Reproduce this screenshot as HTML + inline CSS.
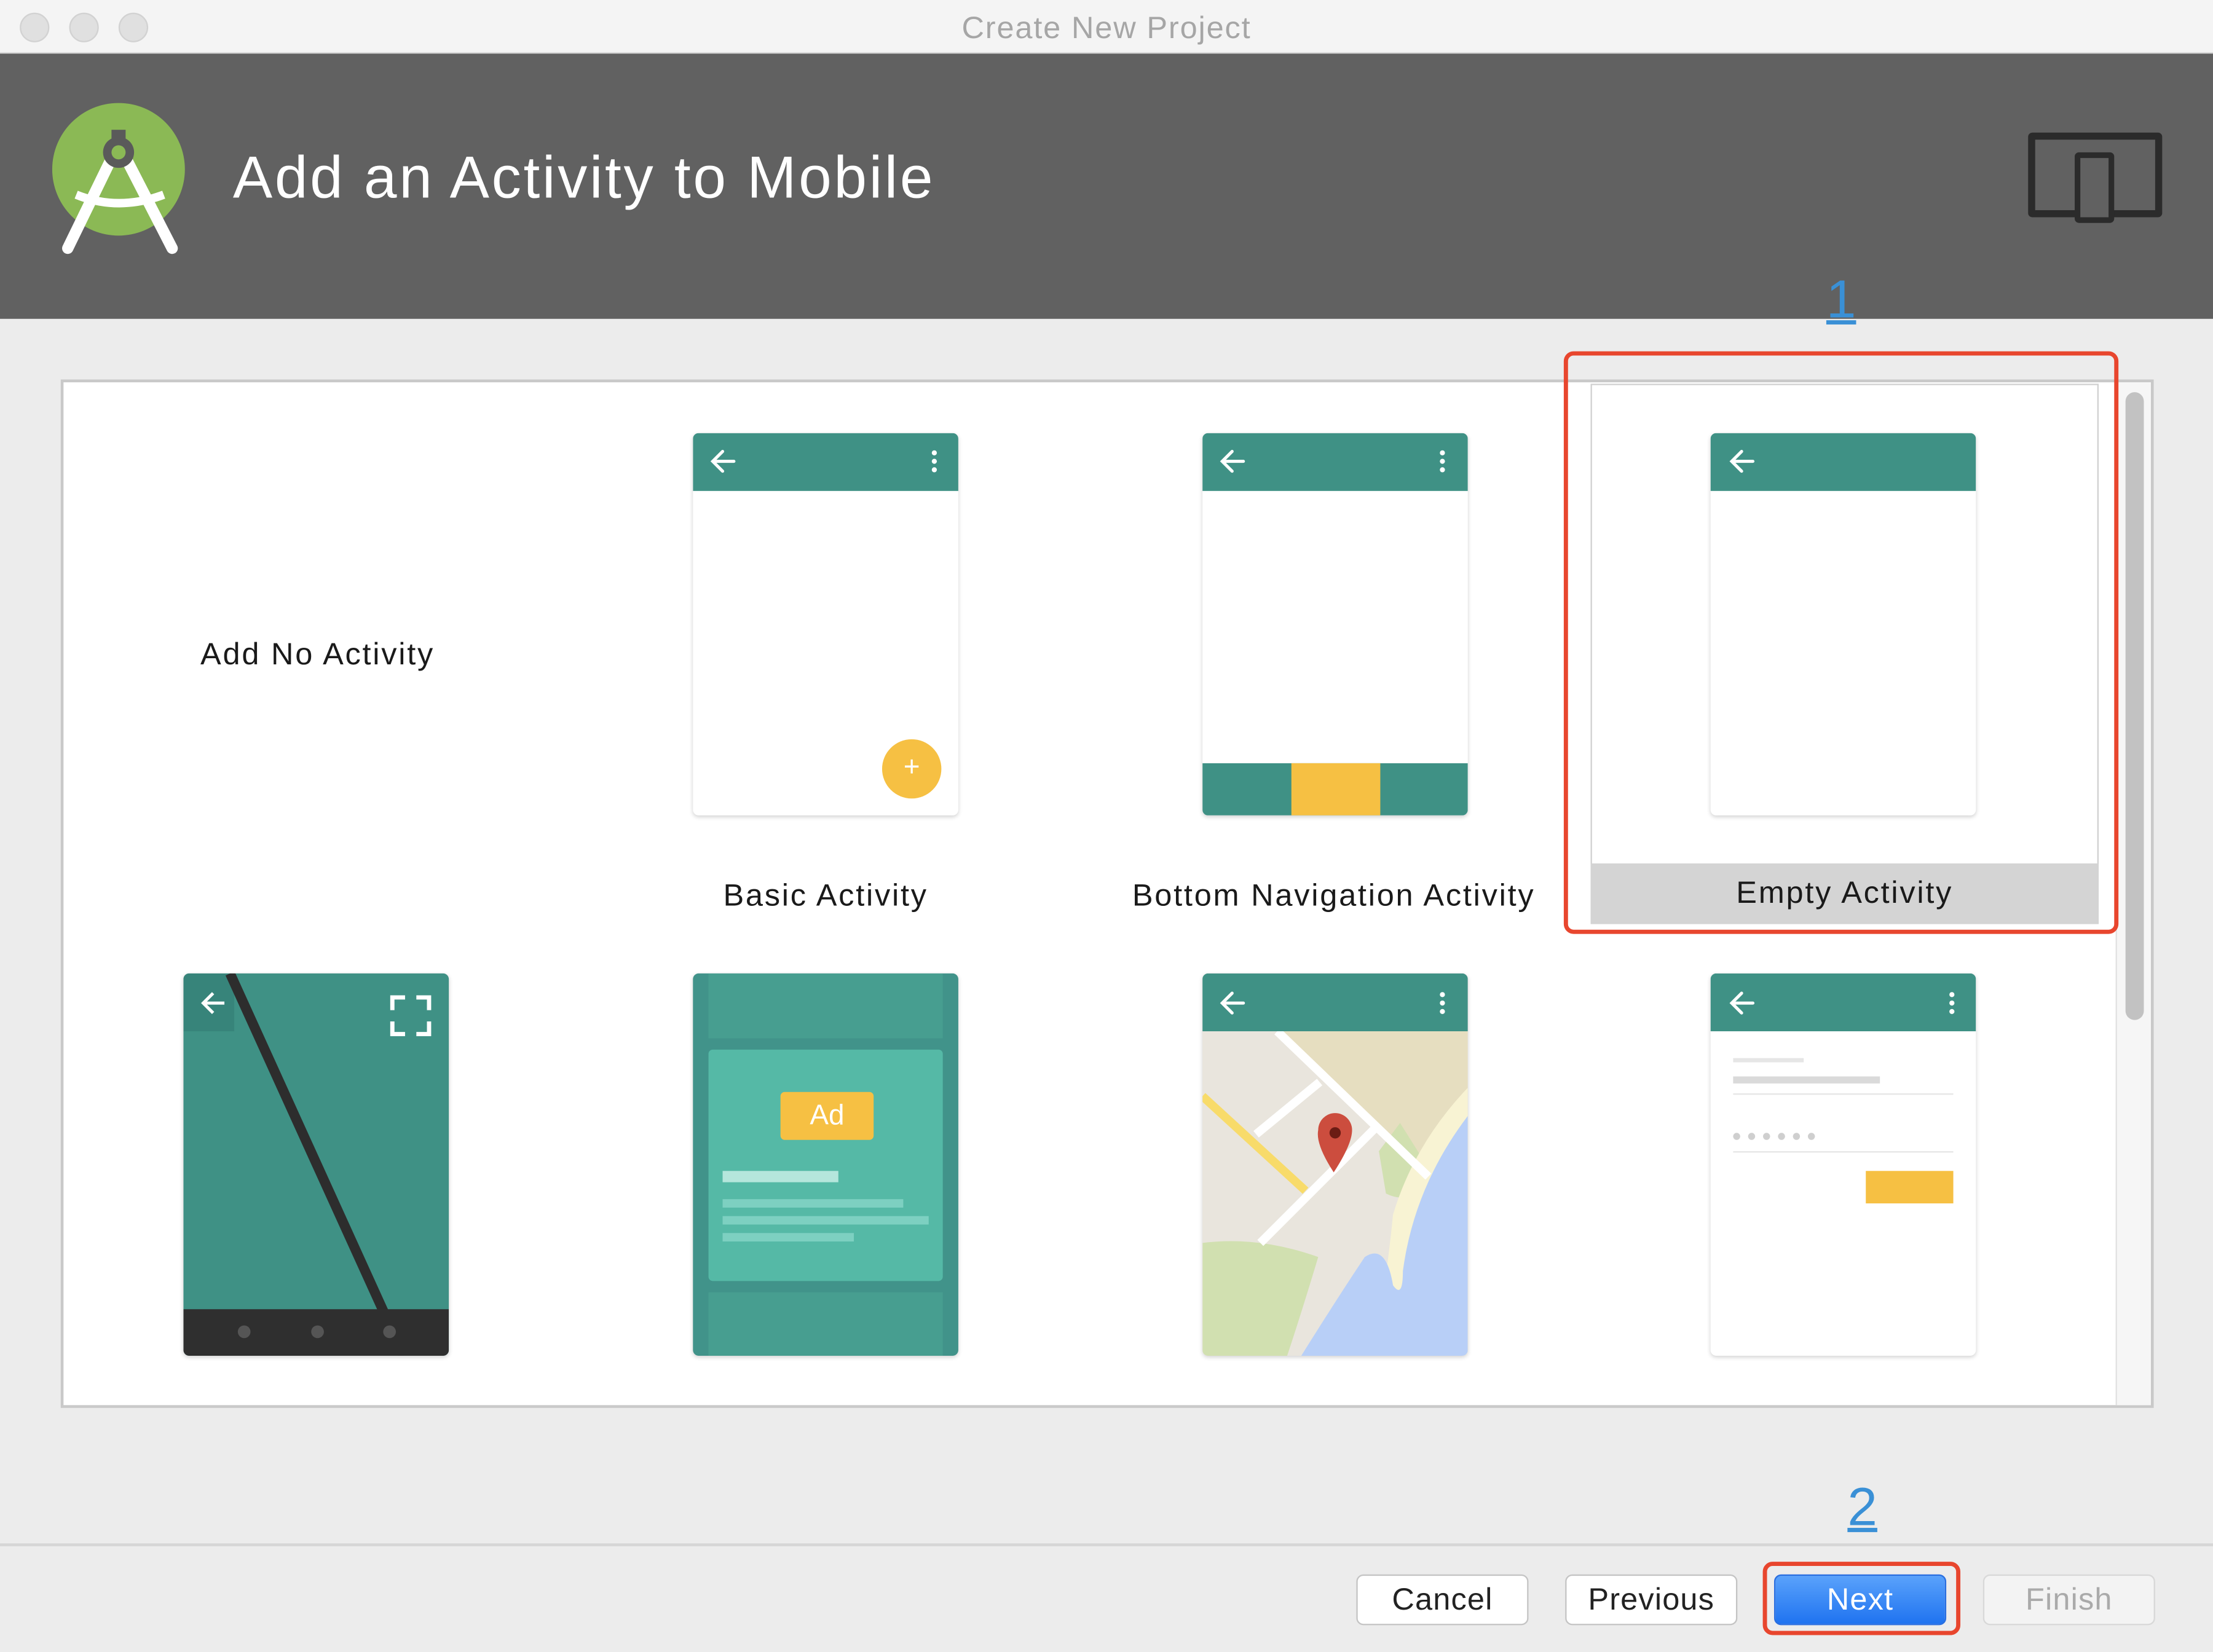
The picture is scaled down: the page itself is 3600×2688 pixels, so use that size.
<!DOCTYPE html>
<html><head><meta charset="utf-8">
<style>
*{margin:0;padding:0;box-sizing:border-box}
html,body{width:3600px;height:2688px;overflow:hidden;background:#ececec}
#w{position:absolute;left:0;top:0;width:1568px;height:1171px;transform:scale(2.29592,2.2955);transform-origin:0 0;font-family:"Liberation Sans",sans-serif;background:#ececec}
.a{position:absolute}
.card{position:absolute;width:188px;height:271px;background:#fff;border-radius:4px;box-shadow:0 1px 3px rgba(0,0,0,.18);overflow:hidden}
.hd{position:absolute;left:0;top:0;width:188px;height:41px;background:#3f9185}
.lbl{position:absolute;font-size:22px;color:#1a1a1a;text-align:center;width:360px;letter-spacing:1.2px}
.btn{position:absolute;top:1116px;height:36px;width:122px;border-radius:5px;background:#fff;border:1px solid #c4c4c4;font-size:22px;text-align:center;line-height:34px;color:#222;letter-spacing:.5px}
</style></head><body><div id="w">
<div class="a" style="left:0;top:0;width:1568px;height:38px;background:#f4f4f4;border-bottom:1px solid #d8d8d8"></div>
<div class="a" style="left:14px;top:9px;width:21px;height:21px;border-radius:50%;background:#e0e0e0;border:1px solid #d2d2d2"></div>
<div class="a" style="left:49px;top:9px;width:21px;height:21px;border-radius:50%;background:#e0e0e0;border:1px solid #d2d2d2"></div>
<div class="a" style="left:84px;top:9px;width:21px;height:21px;border-radius:50%;background:#e0e0e0;border:1px solid #d2d2d2"></div>
<div class="a" style="left:0;top:7px;width:1568px;text-align:center;font-size:22px;letter-spacing:.8px;color:#a6a6a6">Create New Project</div>
<div class="a" style="left:0;top:38px;width:1568px;height:188px;background:#616161"></div>
<svg class="a" style="left:30px;top:68px" width="110" height="115" viewBox="0 0 110 115">
<circle cx="54" cy="52" r="47" fill="#8bb955"/>
<path d="M54 34 L18 108 M54 34 L92 108" stroke="#fff" stroke-width="8" stroke-linecap="round"/>
<path d="M24 70 Q54 82 86 70" stroke="#fff" stroke-width="6" fill="none"/>
<circle cx="54" cy="40" r="11" fill="#5a5a5a"/><circle cx="54" cy="40" r="5" fill="#8bb955"/>
<rect x="49" y="24" width="10" height="8" fill="#5a5a5a"/>
</svg>
<div class="a" style="left:165px;top:102px;font-size:42px;letter-spacing:1.6px;color:#fff">Add an Activity to Mobile</div>
<div class="a" style="left:1437px;top:94px;width:95px;height:60px;border:5px solid #2b2b2b;border-radius:3px"></div>
<div class="a" style="left:1470px;top:108px;width:28px;height:50px;border:4px solid #2b2b2b;background:#616161;border-radius:3px"></div>
<div class="a" style="left:43px;top:269px;width:1483px;height:729px;background:#fff;border:2px solid #c9c9c9"></div>
<div class="a" style="left:1499px;top:271px;width:25px;height:725px;background:#f6f6f6;border-left:1px solid #e2e2e2"></div>
<div class="a" style="left:1506px;top:278px;width:13px;height:445px;background:#c2c2c2;border-radius:7px"></div>
<div class="lbl" style="left:45px;top:451px">Add No Activity</div>
<div class="a" style="left:1127px;top:272px;width:360px;height:383px;border:1px solid #d0d0d0"></div>
<div class="a" style="left:1127px;top:612px;width:360px;height:43px;background:#d4d4d4"></div>
<div class="card" style="left:491px;top:307px"><div class="hd"></div>
<div class="a" style="left:134px;top:217px;width:42px;height:42px;border-radius:50%;background:#f6c043;color:#fff;text-align:center;line-height:40px;font-size:20px">+</div></div>
<div class="card" style="left:852px;top:307px"><div class="hd"></div>
<div class="a" style="left:0;top:234px;width:188px;height:37px;background:#3f9185"></div>
<div class="a" style="left:63px;top:234px;width:63px;height:37px;background:#f6c043"></div></div>
<div class="card" style="left:1212px;top:307px"><div class="hd"></div></div>
<div class="lbl" style="left:405px;top:622px">Basic Activity</div>
<div class="lbl" style="left:765px;top:622px">Bottom Navigation Activity</div>
<div class="lbl" style="left:1127px;top:620px">Empty Activity</div>
<div class="card" style="left:130px;top:690px;background:#3f9185">
<svg width="188" height="271"><rect x="0" y="0" width="36" height="41" fill="#37847a"/>
<path d="M33 0 L156 271" stroke="#2d2d2d" stroke-width="7"/>
<rect x="0" y="238" width="188" height="33" fill="#2f2f2f"/>
<circle cx="43" cy="254" r="4.5" fill="#555"/><circle cx="95" cy="254" r="4.5" fill="#555"/><circle cx="146" cy="254" r="4.5" fill="#555"/>
<path d="M148 26v-9h9M165 17h9v9M174 34v9h-9M157 43h-9v-9" stroke="#fff" stroke-width="3" fill="none"/>
<path d="M14 21h15M21 14l-7 7 7 7" stroke="#fff" stroke-width="2.2" fill="none"/></svg></div>
<div class="card" style="left:491px;top:690px;background:#41938a">
<div class="a" style="left:11px;top:0;width:166px;height:46px;background:#479e90"></div>
<div class="a" style="left:11px;top:54px;width:166px;height:164px;background:#55b9a6;border-radius:3px"></div>
<div class="a" style="left:11px;top:226px;width:166px;height:45px;background:#479e90"></div>
<div class="a" style="left:62px;top:84px;width:66px;height:34px;background:#f6c043;border-radius:3px;color:#fff;font-size:20px;text-align:center;line-height:34px">Ad</div>
<div class="a" style="left:21px;top:140px;width:82px;height:8px;background:#b5e6dc"></div>
<div class="a" style="left:21px;top:160px;width:128px;height:6px;background:#7dd0c1"></div>
<div class="a" style="left:21px;top:172px;width:146px;height:6px;background:#7dd0c1"></div>
<div class="a" style="left:21px;top:184px;width:93px;height:6px;background:#7dd0c1"></div></div>
<div class="card" style="left:852px;top:690px;background:#e9e5dd"><div class="hd"></div>
<svg class="a" style="left:0;top:41px" width="188" height="230">
<path d="M53 0H188V70L160 103Z" fill="#e6dec0"/>
<path d="M125 85 L140 65 L162 100 Q150 125 130 115 Z" fill="#d1e0b0"/>
<path d="M188 40 Q150 80 135 130 Q128 200 118 230 H188Z" fill="#f8f3d3"/>
<path d="M188 60 Q150 110 142 170 Q142 190 135 180 Q130 150 115 160 Q95 190 70 230 H188Z" fill="#b8cff7"/>
<path d="M0 150 Q40 145 82 160 Q70 200 60 230 H0Z" fill="#d1e0b0"/>
<path d="M0 46 L73 113" stroke="#f8db6a" stroke-width="6"/>
<path d="M53 0 L160 103 M83 36 L38 73 M123 68 L41 150" stroke="#fff" stroke-width="6"/>
<path d="M93 100 Q80 80 82 70 A12 12 0 0 1 106 70 Q106 80 93 100Z" fill="#cc4d3e"/><circle cx="94" cy="72" r="4" fill="#6b1c14"/>
</svg></div>
<div class="card" style="left:1212px;top:690px"><div class="hd"></div>
<div class="a" style="left:16px;top:60px;width:50px;height:3px;background:#e6e6e6"></div>
<div class="a" style="left:16px;top:73px;width:104px;height:5px;background:#dadada"></div>
<div class="a" style="left:16px;top:85px;width:156px;height:1px;background:#e6e6e6"></div>
<div class="a" style="left:16px;top:113px;width:58px;height:5px;border-top:5px dotted #cfcfcf"></div>
<div class="a" style="left:16px;top:126px;width:156px;height:1px;background:#e6e6e6"></div>
<div class="a" style="left:110px;top:140px;width:62px;height:23px;background:#f6c043"></div></div>
<svg class="a" style="left:0;top:0" width="1568" height="1171">
<g stroke="#fff" stroke-width="2.2" fill="none" stroke-linecap="round">
<path d="M505 327h15M512 320l-7 7 7 7"/><path d="M866 327h15M873 320l-7 7 7 7"/><path d="M1227 327h15M1234 320l-7 7 7 7"/>
<path d="M866 711h15M873 704l-7 7 7 7"/><path d="M1227 711h15M1234 704l-7 7 7 7"/>
</g>
<g fill="#fff"><circle cx="662" cy="321" r="1.8"/><circle cx="662" cy="327" r="1.8"/><circle cx="662" cy="333" r="1.8"/>
<circle cx="1022" cy="321" r="1.8"/><circle cx="1022" cy="327" r="1.8"/><circle cx="1022" cy="333" r="1.8"/>
<circle cx="1022" cy="705" r="1.8"/><circle cx="1022" cy="711" r="1.8"/><circle cx="1022" cy="717" r="1.8"/>
<circle cx="1383" cy="705" r="1.8"/><circle cx="1383" cy="711" r="1.8"/><circle cx="1383" cy="717" r="1.8"/></g>
</svg>
<div class="a" style="left:1108px;top:249px;width:393px;height:413px;border:3px solid #e8462e;border-radius:7px"></div>
<div class="a" style="left:1294px;top:192px;font-size:38px;color:#3a90d6;text-decoration:underline">1</div>
<div class="a" style="left:0;top:1094px;width:1568px;height:2px;background:#d6d6d6"></div>
<div class="a" style="left:1309px;top:1048px;font-size:38px;color:#3a90d6;text-decoration:underline">2</div>
<div class="btn" style="left:961px">Cancel</div>
<div class="btn" style="left:1109px">Previous</div>
<div class="btn" style="left:1257px;background:linear-gradient(#5aa2fb,#1f73f0);border-color:#2a6fe0;color:#fff">Next</div>
<div class="btn" style="left:1405px;background:#f3f3f3;border-color:#d8d8d8;color:#aaa">Finish</div>
<div class="a" style="left:1249px;top:1107px;width:140px;height:52px;border:3px solid #e8462e;border-radius:7px"></div>
</div></body></html>
